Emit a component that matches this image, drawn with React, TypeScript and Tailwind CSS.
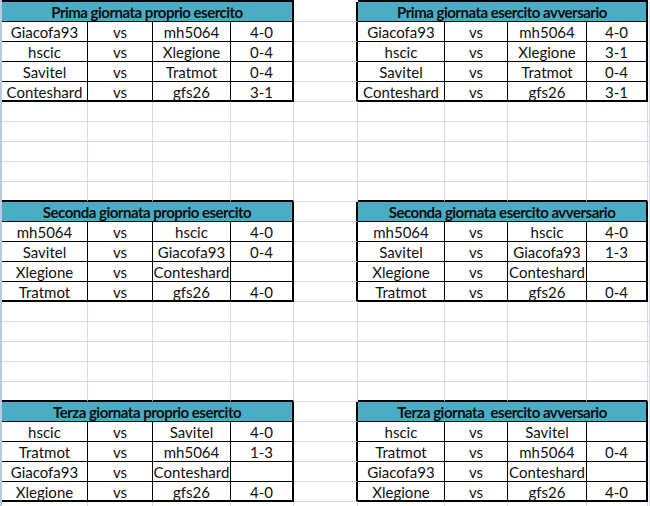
import React from 'react';

type Match = [string, string, string];

type Table = {
  title: string;
  rows: Match[];
};

// ogni sezione: tabella proprio esercito a sinistra, avversario a destra
const sections: { left: Table; right: Table }[] = [
  {
    left: {
      title: 'Prima giornata proprio esercito',
      rows: [
        ['Giacofa93', 'mh5064', '4-0'],
        ['hscic', 'Xlegione', '0-4'],
        ['Savitel', 'Tratmot', '0-4'],
        ['Conteshard', 'gfs26', '3-1'],
      ],
    },
    right: {
      title: 'Prima giornata esercito avversario',
      rows: [
        ['Giacofa93', 'mh5064', '4-0'],
        ['hscic', 'Xlegione', '3-1'],
        ['Savitel', 'Tratmot', '0-4'],
        ['Conteshard', 'gfs26', '3-1'],
      ],
    },
  },
  {
    left: {
      title: 'Seconda giornata proprio esercito',
      rows: [
        ['mh5064', 'hscic', '4-0'],
        ['Savitel', 'Giacofa93', '0-4'],
        ['Xlegione', 'Conteshard', ''],
        ['Tratmot', 'gfs26', '4-0'],
      ],
    },
    right: {
      title: 'Seconda giornata esercito avversario',
      rows: [
        ['mh5064', 'hscic', '4-0'],
        ['Savitel', 'Giacofa93', '1-3'],
        ['Xlegione', 'Conteshard', ''],
        ['Tratmot', 'gfs26', '0-4'],
      ],
    },
  },
  {
    left: {
      title: 'Terza giornata proprio esercito',
      rows: [
        ['hscic', 'Savitel', '4-0'],
        ['Tratmot', 'mh5064', '1-3'],
        ['Giacofa93', 'Conteshard', ''],
        ['Xlegione', 'gfs26', '4-0'],
      ],
    },
    right: {
      title: 'Terza giornata  esercito avversario',
      rows: [
        ['hscic', 'Savitel', ''],
        ['Tratmot', 'mh5064', '0-4'],
        ['Giacofa93', 'Conteshard', ''],
        ['Xlegione', 'gfs26', '4-0'],
      ],
    },
  },
];

const gridCols =
  'grid grid-cols-[86px_65px_78px_63px_64px_87px_63px_79px_61px_1fr]';

const grayCell = 'h-5 border-r border-b border-[#d4d9e3]';

function Cell({ text, cls }: { text?: string; cls: string }) {
  return (
    <div
      className={`h-5 flex items-center justify-center pt-[2px] whitespace-nowrap overflow-visible text-[15px] leading-none text-[#111] ${cls}`}
    >
      {text}
    </div>
  );
}

function Header({ title, cls }: { title: string; cls: string }) {
  return (
    <div
      className={`col-span-4 h-5 flex items-center justify-center pt-[1px] bg-[#4bacc6] whitespace-pre font-bold text-[15px] tracking-[-0.5px] leading-none text-[#111] ${cls}`}
    >
      {title}
    </div>
  );
}

function DataRow({ left, right, last }: { left: Match; right: Match; last: boolean }) {
  const bottom = last ? 'border-b-2 border-b-black' : 'border-b border-b-black';
  return (
    <div className={gridCols}>
      <Cell text={left[0]} cls={`border-r border-r-black ${bottom}`} />
      <Cell text="vs" cls={`border-r border-r-black ${bottom}`} />
      <Cell text={left[1]} cls={`border-r border-r-black ${bottom}`} />
      <Cell text={left[2]} cls={`border-r-2 border-r-black ${bottom}`} />
      <div className="h-5 border-b border-b-[#d4d9e3] border-r-2 border-r-black" />
      <Cell text={right[0]} cls={`border-r border-r-black ${bottom}`} />
      <Cell text="vs" cls={`border-r border-r-black ${bottom}`} />
      <Cell text={right[1]} cls={`border-r border-r-black ${bottom}`} />
      <Cell text={right[2]} cls={`border-r-2 border-r-black ${bottom}`} />
      <div className={grayCell} />
    </div>
  );
}

function EmptyRow({ beforeHeader }: { beforeHeader: boolean }) {
  const t = beforeHeader
    ? 'h-5 border-r border-r-[#d4d9e3] border-b-2 border-b-black'
    : grayCell;
  return (
    <div className={gridCols}>
      <div className={t} />
      <div className={t} />
      <div className={t} />
      <div className={t} />
      <div className={grayCell} />
      <div className={t} />
      <div className={t} />
      <div className={t} />
      <div className={t} />
      <div className={grayCell} />
    </div>
  );
}

export default function App() {
  return (
    <div
      className="w-[650px] h-[506px] overflow-hidden bg-white border-l-2 border-l-[#b9c9e0]"
      style={{ fontFamily: 'Lato, "Liberation Sans", sans-serif' }}
    >
      {/* bordo superiore delle prime tabelle */}
      <div className={`${gridCols} h-[2px]`}>
        <div className="col-span-4 bg-black" />
        <div />
        <div className="col-span-4 bg-black" />
        <div />
      </div>
      {sections.map((s, si) => (
        <div key={si}>
          <div className={gridCols}>
            <Header title={s.left.title} cls="border-r-2 border-r-black border-b border-b-black" />
            <div className="h-5 border-b border-b-[#d4d9e3] border-r-2 border-r-black" />
            <Header title={s.right.title} cls="border-r-2 border-r-black border-b border-b-black" />
            <div className={grayCell} />
          </div>
          {s.left.rows.map((r, i) => (
            <DataRow key={i} left={r} right={s.right.rows[i]} last={i === 3} />
          ))}
          {[0, 1, 2, 3, 4].map((i) => (
            <EmptyRow key={i} beforeHeader={i === 4 && si < sections.length - 1} />
          ))}
        </div>
      ))}
    </div>
  );
}
